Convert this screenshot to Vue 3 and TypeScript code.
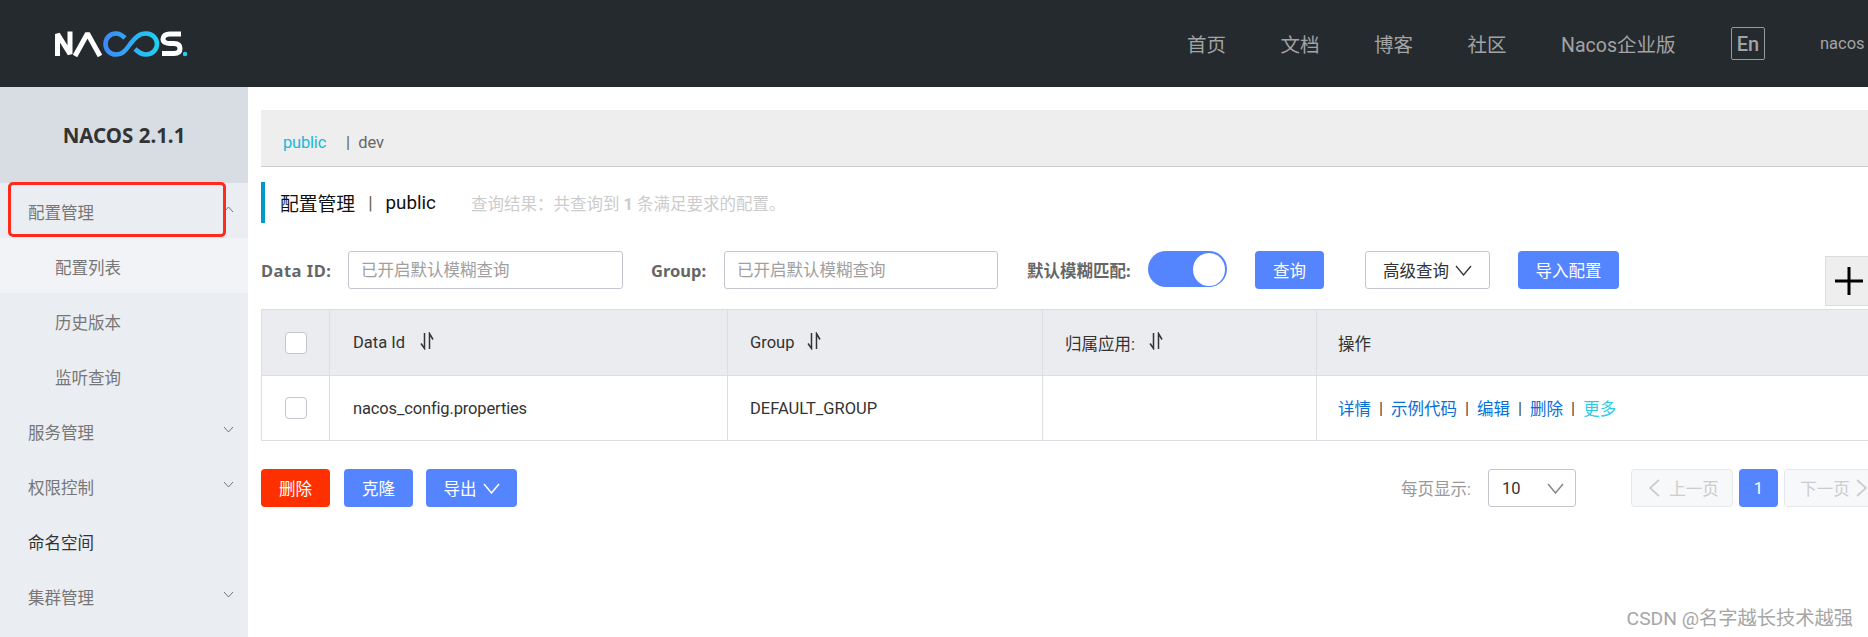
<script setup lang="ts">
interface MenuItem {
  label: string;
  sub?: boolean;
  arrow?: 'up' | 'down';
  cls?: string;
}

const navLinks = ['首页', '文档', '博客', '社区', 'Nacos企业版'];

const menu: MenuItem[] = [
  { label: '配置管理', arrow: 'up' },
  { label: '配置列表', sub: true, cls: 'current' },
  { label: '历史版本', sub: true },
  { label: '监听查询', sub: true },
  { label: '服务管理', arrow: 'down' },
  { label: '权限控制', arrow: 'down' },
  { label: '命名空间', cls: 'dark' },
  { label: '集群管理', arrow: 'down' },
];

const ops = ['详情', '示例代码', '编辑', '删除'];
</script>

<template>
  <div class="page">
    <header class="topbar">
      <svg class="logo" width="136" height="28" viewBox="53 26 136 28" role="img" aria-label="NACOS">
        <defs>
          <linearGradient id="loop" gradientUnits="userSpaceOnUse" x1="104" y1="40" x2="160" y2="40">
            <stop offset="0" stop-color="#3f88f8" />
            <stop offset="1" stop-color="#1fd2f2" />
          </linearGradient>
        </defs>
        <path d="M57.5 52V30L70 50V27.500" fill="none" stroke="#fff" stroke-width="5" stroke-linejoin="bevel" />
        <path d="M75 52L87.500 29.500L100 52" fill="none" stroke="#fff" stroke-width="5" stroke-linejoin="bevel" />
        <path d="M125 34C122 31 119 29.500 116 29.500C109 29.500 105.500 35 105.500 40C105.500 45 109 50.500 116 50.500C124 50.500 127 44 131 39C135 34 139 29.500 146 29.500C153 29.500 157 35 157 40C157 45 153 50.500 146 50.500C142 50.500 138 48 135 45" fill="none" stroke="url(#loop)" stroke-width="4.600" />
        <path d="M181 30H170C164 30 163 33.500 163 35C163 38 166 39.500 170 39.500H174C178 39.500 180 41 180 44.500C180 48 178 49.500 174 49.500H162" fill="none" stroke="#fff" stroke-width="5" />
        <circle cx="185" cy="50" r="2.200" fill="#1fd2f2" />
      </svg>
      <nav class="nav">
        <a v-for="link in navLinks" :key="link" class="nav-link">{{ link }}</a>
        <span class="lang">En</span>
        <span class="user">nacos</span>
      </nav>
    </header>

    <div class="body">
      <aside class="sidebar">
        <div class="version">NACOS 2.1.1</div>
        <div v-for="item in menu" :key="item.label" class="menu-item" :class="[item.cls, { sub: item.sub }]">
          <span>{{ item.label }}</span>
          <svg v-if="item.arrow" class="menu-arrow" :class="item.arrow" width="11" height="7" viewBox="0 0 11 7">
            <path d="M1 1L5.500 6L10 1" fill="none" stroke="#777" stroke-width="1" />
          </svg>
        </div>
        <div class="highlight"></div>
      </aside>

      <main class="main">
        <div class="env-bar">
          <span class="env-active">public</span>
          <span class="env-sep">|</span>
          <span class="env-item">dev</span>
        </div>

        <div class="title-row">
          <span class="title">配置管理</span>
          <span class="title-sep">|</span>
          <span class="title">public</span>
          <span class="result">查询结果：共查询到 <b>1</b> 条满足要求的配置。</span>
        </div>

        <div class="search-row">
          <label class="field-label label-id">Data ID:</label>
          <input class="field field-a" placeholder="已开启默认模糊查询" />
          <label class="field-label label-group">Group:</label>
          <input class="field field-b" placeholder="已开启默认模糊查询" />
          <label class="field-label label-fuzzy">默认模糊匹配:</label>
          <span class="switch"><span class="knob"></span></span>
          <button class="btn btn-query">查询</button>
          <button class="btn-outline">
            高级查询
            <svg width="17" height="11" viewBox="0 0 17 11"><path d="M1 1L8.500 10L16 1" fill="none" stroke="#333" stroke-width="1.300" /></svg>
          </button>
          <button class="btn btn-import">导入配置</button>
        </div>

        <div class="table">
          <div class="tr head">
            <div class="td c-check"><span class="checkbox"></span></div>
            <div class="td c-id">
              Data Id
              <svg class="sort sort-id" width="14" height="18" viewBox="0 0 14 18"><path d="M4.500 1V16.500L1 11.500M9.500 17V1.500L13 7.500" fill="none" stroke="#333" stroke-width="1.500" /></svg>
            </div>
            <div class="td c-group">
              Group
              <svg class="sort" width="14" height="18" viewBox="0 0 14 18"><path d="M4.500 1V16.500L1 11.500M9.500 17V1.500L13 7.500" fill="none" stroke="#333" stroke-width="1.500" /></svg>
            </div>
            <div class="td c-app">
              归属应用:
              <svg class="sort sort-app" width="14" height="18" viewBox="0 0 14 18"><path d="M4.500 1V16.500L1 11.500M9.500 17V1.500L13 7.500" fill="none" stroke="#333" stroke-width="1.500" /></svg>
            </div>
            <div class="td c-ops">操作</div>
          </div>
          <div class="tr">
            <div class="td c-check"><span class="checkbox"></span></div>
            <div class="td c-id name">nacos_config.properties</div>
            <div class="td c-group">DEFAULT_GROUP</div>
            <div class="td c-app"></div>
            <div class="td c-ops">
              <template v-for="op in ops" :key="op">
                <a class="op-link">{{ op }}</a>
                <span class="op-sep">|</span>
              </template>
              <a class="op-more">更多</a>
            </div>
          </div>
        </div>

        <div class="footer-row">
          <button class="btn btn-danger">删除</button>
          <button class="btn btn-clone">克隆</button>
          <button class="btn btn-export">
            导出
            <svg width="17" height="11" viewBox="0 0 17 11"><path d="M1 1L8.500 10L16 1" fill="none" stroke="#fff" stroke-width="1.500" /></svg>
          </button>
          <span class="page-size-label">每页显示:</span>
          <div class="page-size">
            <span>10</span>
            <svg width="17" height="11" viewBox="0 0 17 11"><path d="M1 1L8.500 10L16 1" fill="none" stroke="#888" stroke-width="1.500" /></svg>
          </div>
          <button class="pager pager-prev">
            <svg width="12" height="18" viewBox="0 0 12 18"><path d="M11 1L2 9L11 17" fill="none" stroke="#ccc" stroke-width="1.700" /></svg>
            上一页
          </button>
          <button class="btn page-num">1</button>
          <button class="pager pager-next">
            下一页
            <svg width="12" height="18" viewBox="0 0 12 18"><path d="M1 1L10 9L1 17" fill="none" stroke="#ccc" stroke-width="1.700" /></svg>
          </button>
        </div>

        <div class="plus-box">
          <svg width="28" height="28" viewBox="0 0 28 28"><path d="M14 0V28M0 14H28" fill="none" stroke="#000" stroke-width="3" /></svg>
        </div>
        <div class="watermark">CSDN @名字越长技术越强</div>
      </main>
    </div>
  </div>
</template>

<style>
html, body { margin: 0; overflow: hidden; background: #fff; }
</style>

<style scoped>
.page { width: 1868px; height: 637px; overflow: hidden; font-family: Roboto, "Noto Sans CJK SC", sans-serif; font-size: 16.500px; color: #333; }

.topbar { height: 87px; background: #252a2f; display: flex; align-items: center; }
.logo { margin-left: 53px; flex: none; }
.nav { margin-left: auto; display: flex; align-items: center; width: 681px; flex: none; color: #a3a3a3; }
.nav-link { font-size: 19.500px; margin-right: 54.500px; white-space: nowrap; }
.nav-link:nth-child(5) { margin-right: 55.500px; }
.lang { width: 32px; height: 31px; border: 1px solid #999; border-radius: 2px; display: flex; align-items: center; justify-content: center; font-size: 20px; font-weight: 500; flex: none; }
.user { margin-left: 55px; font-size: 16.500px; white-space: nowrap; }

.body { display: flex; height: 550px; }
.sidebar { width: 248px; flex: none; background: #eaedf1; position: relative; color: #777; }
.version { height: 96px; background: #d8dce3; display: flex; align-items: center; justify-content: center; font-weight: 700; font-size: 20.500px; color: #333; box-sizing: border-box; font-family: "Noto Sans", "Noto Sans CJK SC", sans-serif; }
.menu-item { height: 55px; padding-left: 28px; padding-top: 2px; display: flex; align-items: center; position: relative; box-sizing: border-box; }
.menu-item.sub { padding-left: 55px; }
.menu-item.current { background: #f2f3f7; }
.menu-item.dark { color: #333; }
.menu-arrow { position: absolute; left: 223px; top: 23px; }
.menu-arrow.up { transform: rotate(180deg); }
.highlight { position: absolute; left: 8px; top: 95px; width: 212px; height: 49px; border: 3px solid #ff2a1c; border-radius: 5px; }

.main { flex: 1; min-width: 0; padding: 23px 0 0 13px; position: relative; overflow: hidden; }
.env-bar { height: 42px; background: #eee; border-bottom: 1px solid #ccc; display: flex; align-items: flex-end; padding: 0 0 14px 22px; }
.env-active { color: #1cb7d8; letter-spacing: -0.2px; }
.env-sep { margin-left: 20px; color: #663; }
.env-item { margin-left: 8px; color: #666; }

.title-row { margin-top: 15px; height: 41px; border-left: 4px solid #0099cc; padding-left: 15px; display: flex; align-items: center; color: #111; }
.title { font-size: 18.800px; }
.title-sep { margin: 0 13px; font-size: 18px; color: #663; }
.result { margin-left: 35px; font-size: 16.500px; color: #ccc; }

.search-row { margin-top: 28px; height: 38px; display: flex; align-items: center; }
.field-label { font-weight: 700; color: #666; font-size: 16.500px; white-space: nowrap; flex: none; font-family: "Noto Sans", "Noto Sans CJK SC", sans-serif; }
.label-id { width: 87px; letter-spacing: 0.5px; }
.label-group { margin-left: 28px; width: 73px; }
.label-fuzzy { margin-left: 29px; width: 121px; }
.field { height: 38px; box-sizing: border-box; border: 1px solid #c4c6cf; border-radius: 3px; padding: 0 12px; font: inherit; font-size: 16.500px; outline: none; flex: none; }
.field::placeholder { color: #a0a0a0; opacity: 1; }
.field-a { width: 275px; }
.field-b { width: 274px; }
.switch { width: 79px; height: 36px; background: #5584ff; border-radius: 18px; display: flex; align-items: center; justify-content: flex-end; padding-right: 2px; box-sizing: border-box; align-self: flex-start; flex: none; }
.knob { width: 32px; height: 33px; background: #fff; border-radius: 50%; }
.btn { height: 38px; border: none; border-radius: 4px; background: #5584ff; color: #fff; font: inherit; font-size: 16.500px; padding: 0; flex: none; display: inline-flex; align-items: center; justify-content: center; gap: 6px; }
.btn-query { width: 69px; margin-left: 28px; }
.btn-outline { width: 125px; height: 38px; margin-left: 41px; background: #fff; border: 1px solid #c4c6cf; border-radius: 3px; font: inherit; font-size: 16.500px; color: #333; display: inline-flex; align-items: center; justify-content: center; gap: 6px; padding: 0; flex: none; }
.btn-import { width: 101px; margin-left: 28px; }

.table { margin-top: 20px; width: 1640px; border-top: 1px solid #dcdee3; border-left: 1px solid #dcdee3; }
.tr { display: flex; height: 65px; border-bottom: 1px solid #dcdee3; box-sizing: border-box; }
.tr.head { height: 66px; background: #ebecf0; }
.td { display: flex; align-items: center; padding-left: 23px; box-sizing: border-box; border-right: 1px solid #dcdee3; white-space: nowrap; flex: none; }
.c-check { width: 68px; padding-left: 23px; }
.c-id { width: 398px; padding-left: 23px; }
.c-group { width: 315px; padding-left: 22px; }
.c-app { width: 274px; padding-left: 22px; }
.c-ops { width: 600px; border-right: none; padding-left: 21px; }
.name { letter-spacing: -0.150px; }
.checkbox { width: 22px; height: 22px; box-sizing: border-box; background: #fff; border: 1px solid #c4c6cf; border-radius: 4px; }
.sort { margin-left: 13px; margin-top: -3px; }
.sort-id { margin-left: 15px; }
.sort-app { margin-left: 14px; }
.op-link { color: #0a6fd6; }
.op-sep { margin: 0 8px; color: #444; }
.op-more { color: #2bcde4; }

.footer-row { margin-top: 28px; height: 38px; display: flex; align-items: center; }
.btn-danger { width: 69px; background: #ff3000; }
.btn-clone { width: 69px; margin-left: 14px; }
.btn-export { width: 91px; margin-left: 13px; }
.page-size-label { margin-left: 884px; color: #999; white-space: nowrap; flex: none; width: 87px; }
.page-size { width: 88px; height: 38px; box-sizing: border-box; border: 1px solid #c4c6cf; border-radius: 3px; display: flex; align-items: center; justify-content: space-between; padding: 0 11px 0 13px; flex: none; color: #333; }
.pager { height: 38px; border: 1px solid #e6e7eb; border-radius: 4px; background: #f7f8fa; color: #ccc; font: inherit; font-size: 16.500px; display: inline-flex; align-items: center; justify-content: center; gap: 6px; padding: 0; flex: none; }
.pager-prev { width: 102px; margin-left: 55px; gap: 9px; padding-left: 3px; }
.page-num { width: 39px; margin-left: 6px; }
.pager-next { width: 100px; margin-left: 6px; }

.plus-box { position: absolute; left: 1577px; top: 169px; width: 50px; height: 50px; background: #eee; border: 1px solid #ddd; box-sizing: border-box; display: flex; align-items: center; padding-left: 9px; }
.watermark { position: absolute; right: 15px; top: 516px; font-size: 19.250px; color: #a6a6a6; white-space: nowrap; }
</style>
